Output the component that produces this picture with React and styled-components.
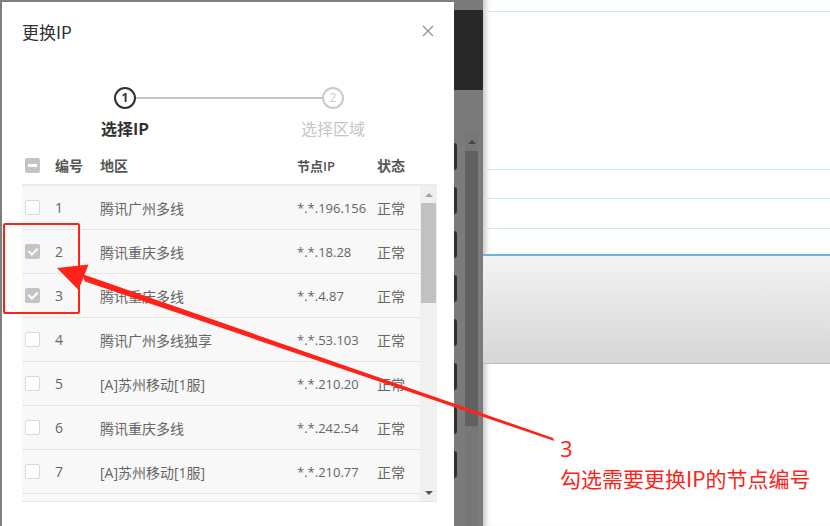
import React from "react";
import styled, { createGlobalStyle } from "styled-components";

const GlobalStyle = createGlobalStyle`
  html, body {
    margin: 0;
    padding: 0;
    background: #fff;
  }
  body {
    font-family: "Open Sans", "Noto Sans CJK SC", sans-serif;
  }
`;

const rows = [
  { id: 1, region: "腾讯广州多线", ip: "*.*.196.156", checked: false },
  { id: 2, region: "腾讯重庆多线", ip: "*.*.18.28", checked: true },
  { id: 3, region: "腾讯重庆多线", ip: "*.*.4.87", checked: true },
  { id: 4, region: "腾讯广州多线独享", ip: "*.*.53.103", checked: false },
  { id: 5, region: "[A]苏州移动[1服]", ip: "*.*.210.20", checked: false },
  { id: 6, region: "腾讯重庆多线", ip: "*.*.242.54", checked: false },
  { id: 7, region: "[A]苏州移动[1服]", ip: "*.*.210.77", checked: false },
];

const App = () => {
  return (
    <>
      <GlobalStyle />
      <Screen>
        <Backdrop>
          <Modal>
            <Header>
              <Title>更换IP</Title>
              <Close>
                <svg width="12" height="12" viewBox="0 0 12 12">
                  <path d="M1 1L11 11M11 1L1 11" stroke="#8c8c8c" strokeWidth="1.1" />
                </svg>
              </Close>
            </Header>

            <Steps>
              <Track>
                <Circle $active>1</Circle>
                <Connector />
                <Circle>2</Circle>
              </Track>
              <Labels>
                <StepLabel $active>选择IP</StepLabel>
                <StepLabel>选择区域</StepLabel>
              </Labels>
            </Steps>

            <Table>
              <HeadRow>
                <Check $state="partial" />
                <span>编号</span>
                <span>地区</span>
                <Ip>节点IP</Ip>
                <span>状态</span>
              </HeadRow>
              <Body>
                <RowList>
                  {rows.map(r => (
                    <Row key={r.id}>
                      <Check $state={r.checked ? "checked" : "off"} />
                      <span>{r.id}</span>
                      <span>{r.region}</span>
                      <Ip>{r.ip}</Ip>
                      <span>正常</span>
                    </Row>
                  ))}
                </RowList>
                <Scrollbar>
                  <ArrowBtn>
                    <Tri />
                  </ArrowBtn>
                  <Thumb />
                  <ArrowBtn $down>
                    <Tri $down />
                  </ArrowBtn>
                </Scrollbar>
              </Body>
            </Table>
          </Modal>

          <Strip>
            <DarkBand />
            <StripList>
              <StripItems>
                {[0, 1, 2, 3, 4, 5, 6, 7].map(i => (
                  <StripItem key={i} />
                ))}
              </StripItems>
              <StripScroll>
                <StripArrow />
                <StripThumb />
              </StripScroll>
            </StripList>
          </Strip>
        </Backdrop>

        <Panel>
          <Rule $top={11} />
          <Rule $top={157} />
          <Rule $top={28} />
          <Rule $top={29} />
          <BlueRule />
          <Toolbar />
        </Panel>

        <Callout />
        <Arrow width="830" height="526" viewBox="0 0 830 526">
          <polygon points="553,438 554.5,441 85,281.5 82,274" fill="#ff2218" />
          <polygon points="57,268 88.5,264.5 78.5,290" fill="#ff2218" />
        </Arrow>
        <Note>
          <NoteNum>3</NoteNum>
          <NoteText>勾选需要更换IP的节点编号</NoteText>
        </Note>
      </Screen>
    </>
  );
};

const Screen = styled.div`
  position: relative;
  width: 830px;
  height: 526px;
  overflow: hidden;
  display: flex;
`;

const Backdrop = styled.div`
  width: 483px;
  flex: none;
  display: flex;
  padding: 2px 0 0 2px;
  box-sizing: border-box;
  background: #7f7f7f;
`;

const Modal = styled.div`
  width: 454px;
  height: 524px;
  flex: none;
  background: #fff;
  display: flex;
  flex-direction: column;
`;

const Header = styled.div`
  height: 62px;
  display: flex;
  align-items: center;
  justify-content: space-between;
  padding: 0 22px 4px 20px;
  box-sizing: border-box;
`;

const Title = styled.div`
  font-family: "Noto Sans CJK SC", sans-serif;
  font-size: 17px;
  color: #303133;
`;

const Close = styled.div`
  width: 12px;
  height: 12px;
  display: flex;
`;

const Steps = styled.div`
  display: flex;
  flex-direction: column;
  padding-top: 23px;
`;

const Track = styled.div`
  display: flex;
  align-items: center;
  padding-left: 112px;
`;

const Circle = styled.div`
  width: 22px;
  height: 22px;
  box-sizing: border-box;
  border-radius: 50%;
  border: 2px solid ${p => (p.$active ? "#303133" : "#c8cad0")};
  color: ${p => (p.$active ? "#303133" : "#c8cad0")};
  font-weight: ${p => (p.$active ? 700 : 400)};
  font-size: 12px;
  display: flex;
  align-items: center;
  justify-content: center;
  line-height: 1;
`;

const Connector = styled.div`
  width: 186px;
  height: 2px;
  background: #c4c6cc;
`;

const Labels = styled.div`
  display: flex;
  gap: 88px;
  padding-left: 63px;
  margin-top: 9px;
`;

const StepLabel = styled.div`
  width: 120px;
  text-align: center;
  font-family: "Noto Sans CJK SC", sans-serif;
  font-size: 16px;
  line-height: 20px;
  font-weight: ${p => (p.$active ? 700 : 400)};
  color: ${p => (p.$active ? "#303133" : "#c4c6cc")};
`;

const Table = styled.div`
  margin: 12px 0 0 20px;
  width: 415px;
  display: flex;
  flex-direction: column;
`;

const cols = `
  display: grid;
  grid-template-columns: 30px 45px 197px 80px 1fr;
  align-items: center;
  padding-left: 3px;
  font-size: 14px;
  font-family: "Open Sans", "Noto Sans CJK SC", sans-serif;
`;

const HeadRow = styled.div`
  ${cols}
  height: 36px;
  box-sizing: border-box;
  padding-bottom: 4px;
  color: #555;
  font-weight: 600;
  border-bottom: 2px solid #ececec;
`;

const Ip = styled.span`
  font-size: 13px;
`;

const Body = styled.div`
  display: flex;
  height: 315px;
  border-bottom: 1px solid #e6e6e6;
  background: #f8f8f8;
`;

const RowList = styled.div`
  flex: 1;
  overflow: hidden;
`;

const Row = styled.div`
  ${cols}
  height: 43px;
  border-bottom: 1px solid #e6e6e6;
  color: #666;
  background: #f8f8f8;
`;

const Check = styled.span`
  width: 15px;
  height: 15px;
  box-sizing: border-box;
  border-radius: 2px;
  position: relative;
  border: 1px solid ${p => (p.$state === "off" ? "#d6d9e0" : "#c4c4c4")};
  background: ${p => (p.$state === "off" ? "#fff" : "#c4c4c4")};

  &::after {
    content: "";
    position: absolute;
    display: ${p => (p.$state === "off" ? "none" : "block")};
    ${p =>
      p.$state === "partial"
        ? `left: 2px; right: 2px; top: 5px; height: 3px; background: #fff;`
        : `left: 4px; top: 1px; width: 4px; height: 7px; border: solid #fff; border-width: 0 2px 2px 0; transform: rotate(45deg);`}
  }
`;

const Scrollbar = styled.div`
  width: 17px;
  flex: none;
  background: #f0f0f0;
  display: flex;
  flex-direction: column;
`;

const ArrowBtn = styled.div`
  height: 17px;
  display: flex;
  align-items: center;
  justify-content: center;
  margin-top: ${p => (p.$down ? "auto" : "0")};
`;

const Tri = styled.span`
  width: 0;
  height: 0;
  border-left: 4px solid transparent;
  border-right: 4px solid transparent;
  ${p =>
    p.$down
      ? "border-top: 4px solid #555;"
      : "border-bottom: 4px solid #a3a3a3;"}
`;

const Thumb = styled.div`
  height: 100px;
  margin: 0 1px;
  background: #c1c1c1;
`;

const Strip = styled.div`
  flex: 1;
  display: flex;
  flex-direction: column;
  margin-left: -2px;
  margin-top: -2px;
  background: #7a7a7a;
`;

const DarkBand = styled.div`
  margin-top: 10px;
  height: 80px;
  background: #282828;
`;

const StripList = styled.div`
  margin-top: 43px;
  flex: 1;
  display: flex;
  background: #7b7b7b;
`;

const StripItems = styled.div`
  width: 10px;
  display: flex;
  flex-direction: column;
  gap: 17px;
  padding-top: 10px;
`;

const StripItem = styled.div`
  width: 3px;
  height: 27px;
  background: #303030;
  border-radius: 0 3px 3px 0;
`;

const StripScroll = styled.div`
  width: 13px;
  margin-left: 1px;
  background: #777;
  display: flex;
  flex-direction: column;
`;

const StripArrow = styled.div`
  height: 18px;
  display: flex;
  align-items: center;
  justify-content: center;
  &::before {
    content: "";
    border-left: 4px solid transparent;
    border-right: 4px solid transparent;
    border-bottom: 4px solid #444;
  }
`;

const StripThumb = styled.div`
  height: 275px;
  background: #606060;
`;

const Panel = styled.div`
  flex: 1;
  display: flex;
  flex-direction: column;
  background: #fff;
  box-shadow: inset 7px 0 6px -5px rgba(0, 0, 0, 0.28);
`;

const Rule = styled.div`
  margin-top: ${p => p.$top}px;
  height: 1px;
  background: #c9ebf7;
`;

const BlueRule = styled.div`
  margin-top: 25px;
  height: 2px;
  background: #6fb3d6;
`;

const Toolbar = styled.div`
  height: 107px;
  background: linear-gradient(#f3f3f3, #d6d6d6);
  border-bottom: 1px solid #bdbdbd;
`;

const Callout = styled.div`
  position: absolute;
  left: 3px;
  top: 223px;
  width: 73px;
  height: 87px;
  border: 2px solid #ff2218;
  border-radius: 2px;
`;

const Arrow = styled.svg`
  position: absolute;
  left: 0;
  top: 0;
  pointer-events: none;
`;

const Note = styled.div`
  position: absolute;
  left: 560px;
  top: 434px;
  color: #ff2218;
  font-family: "Noto Sans CJK SC", sans-serif;
  display: flex;
  flex-direction: column;
`;

const NoteNum = styled.div`
  font-family: "Open Sans", sans-serif;
  font-size: 22px;
  line-height: 28px;
`;

const NoteText = styled.div`
  font-size: 21px;
  line-height: 30px;
  margin-top: 1px;
`;

export default App;
